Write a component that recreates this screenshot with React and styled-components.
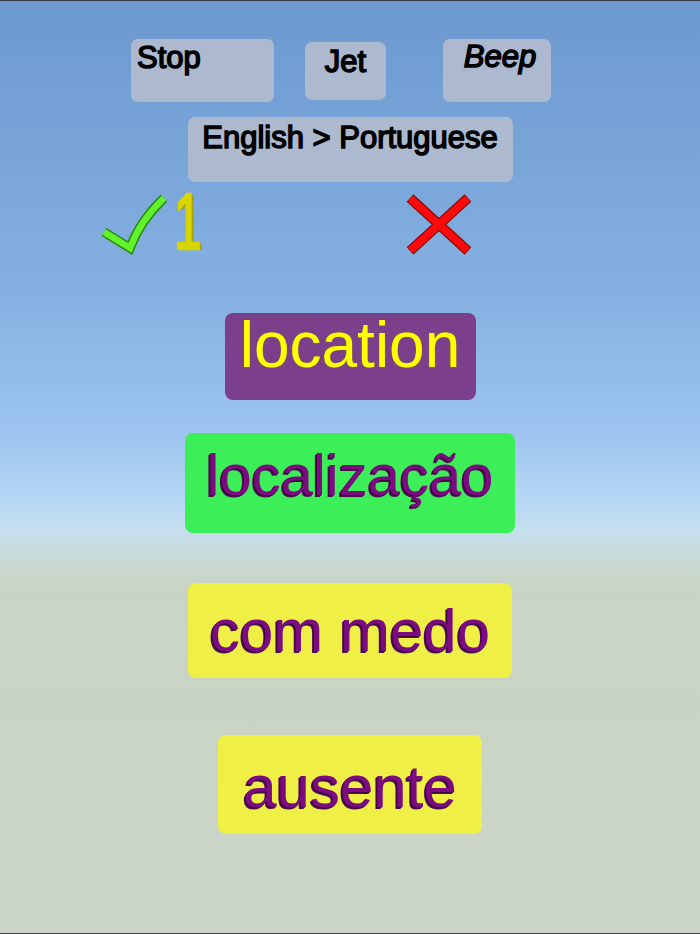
import React from "react";
import styled, { createGlobalStyle } from "styled-components";

const Global = createGlobalStyle`
  html, body { margin: 0; padding: 0; }
  body { font-family: "Liberation Sans", Arial, sans-serif; }
  #root { width: 700px; height: 934px; }
`;

const Scene = styled.div`
  box-sizing: border-box;
  width: 700px;
  height: 934px;
  border-top: 1px solid #323846;
  border-bottom: 1px solid #3c3f3c;
  padding-top: 38px;
  display: flex;
  flex-direction: column;
  overflow: hidden;
  background: linear-gradient(
    to bottom,
    #6c99cf 0px,
    #78a4d8 150px,
    #86b1e2 300px,
    #9cc4ef 430px,
    #b6d6f4 500px,
    #c6dfee 530px,
    #c9dbd8 555px,
    #c9d5c4 585px,
    #cad4c5 700px,
    #cbd5c9 934px
  );
`;

const ControlRow = styled.div`
  display: flex;
  align-items: center;
  padding-left: 131px;
`;

const ControlButton = styled.div`
  box-sizing: border-box;
  width: ${(p) => p.$w}px;
  height: ${(p) => p.$h}px;
  margin-left: ${(p) => p.$ml || 0}px;
  align-self: ${(p) => (p.$center ? "center" : "auto")};
  margin-top: ${(p) => p.$mt || 0}px;
  background: #adb9cf;
  border-radius: 7px;
  display: flex;
  justify-content: ${(p) => (p.$left ? "flex-start" : "center")};
  align-items: flex-start;
  padding: ${(p) => p.$pt || 0}px 0 0 ${(p) => p.$pl || 0}px;
  font-size: 31px;
  line-height: 1;
  color: #000;
  font-style: ${(p) => (p.$italic ? "italic" : "normal")};
  -webkit-text-stroke: 1.5px #000;
  white-space: nowrap;
`;

const ScoreRow = styled.div`
  display: flex;
  align-items: flex-start;
  height: 60px;
  margin-top: 11px;
  padding-left: 100px;
`;

const Count = styled.span`
  display: inline-block;
  width: 30px;
  margin-left: 6px;
  font-size: 80px;
  line-height: 1;
  margin-top: -11px;
  color: #d8d400;
  -webkit-text-stroke: 2.5px #d8d400;
  transform: scaleX(0.62);
  transform-origin: 0 0;
  text-shadow: 3px 1px 0 #a8a200, 4px 1px 0 #a8a200;
`;

const WordCard = styled.div`
  box-sizing: border-box;
  align-self: center;
  width: ${(p) => p.$w}px;
  height: ${(p) => p.$h}px;
  margin-top: ${(p) => p.$mt}px;
  padding-top: ${(p) => p.$pt}px;
  border-radius: 8px;
  background: ${(p) => p.$bg};
  color: ${(p) => p.$fg};
  font-size: ${(p) => p.$fs}px;
  line-height: 1;
  text-align: center;
  white-space: nowrap;
  text-shadow: ${(p) => p.$shadow || "none"};
`;

const Mark = styled.svg`
  flex: none;
  margin-left: ${(p) => p.$ml || 0}px;
  margin-top: ${(p) => p.$mt || 0}px;
`;

function CheckMark() {
  const d = "M4 39 L30 55 Q40 28 64 5";
  return (
    <Mark width="68" height="62" viewBox="0 0 68 62">
      <path d={d} fill="none" stroke="#2a8a12" strokeWidth="9.5" strokeLinejoin="miter" />
      <path d={d} fill="none" stroke="#62f22a" strokeWidth="6.5" strokeLinejoin="miter" />
    </Mark>
  );
}

function Cross() {
  return (
    <Mark width="66" height="62" viewBox="0 0 66 62" $ml={201}>
      <g stroke="#8a0a0a" strokeWidth="10">
        <line x1="5" y1="5" x2="63" y2="58" />
        <line x1="5" y1="58" x2="63" y2="5" />
      </g>
      <g stroke="#ff0a0a" strokeWidth="7.5">
        <line x1="5.5" y1="5.5" x2="62.5" y2="57.5" />
        <line x1="5.5" y1="57.5" x2="62.5" y2="5.5" />
      </g>
    </Mark>
  );
}

const purpleShadow = "-1px 1px 0 #3d0640, -2px 2px 0 #4a1050";

export default function App() {
  return (
    <>
      <Global />
      <Scene>
        <ControlRow>
          <ControlButton $w={143} $h={63} $left $pl={6} $pt={3}>
            Stop
          </ControlButton>
          <ControlButton $w={81} $h={58} $ml={31} $pt={4}>
            Jet
          </ControlButton>
          <ControlButton $w={108} $h={63} $ml={57} $pt={2} $pl={6} $italic>
            Beep
          </ControlButton>
        </ControlRow>
        <ControlButton $w={325} $h={65} $center $mt={15} $pt={5}>
          English &gt; Portuguese
        </ControlButton>
        <ScoreRow>
          <CheckMark />
          <Count>1</Count>
          <Cross />
        </ScoreRow>
        <WordCard $w={251} $h={87} $mt={60} $pt={0} $fs={64} $bg="#7b3f8b" $fg="#ffff00"
          $shadow="0 0 1px #8a8a10">
          location
        </WordCard>
        <WordCard $w={330} $h={100} $mt={33} $pt={13} $fs={58} $bg="#3cee58" $fg="#7c0a80"
          $shadow={purpleShadow}>
          localização
        </WordCard>
        <WordCard $w={324} $h={95} $mt={50} $pt={18} $fs={60} $bg="#f0ef45" $fg="#7c0a80"
          $shadow={purpleShadow}>
          com medo
        </WordCard>
        <WordCard $w={264} $h={99} $mt={57} $pt={22} $fs={60} $bg="#f0ef45" $fg="#7c0a80"
          $shadow={purpleShadow}>
          ausente
        </WordCard>
      </Scene>
    </>
  );
}
